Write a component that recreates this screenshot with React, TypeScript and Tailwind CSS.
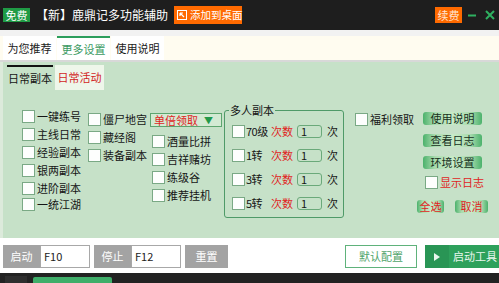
import React from "react";

const Check = ({ label, red }: { label: string; red?: boolean }) => (
  <div className="flex items-center h-[18px]">
    <span className="w-[13px] h-[13px] shrink-0 border border-[#7aa985] bg-[#fdfefd]" />
    <span
      className={
        red
          ? "ml-[2px] text-[11px] leading-none text-[#e01e1e] whitespace-nowrap"
          : "ml-[2px] text-[11px] leading-none text-[#151515] whitespace-nowrap"
      }
    >
      {label}
    </span>
  </div>
);

const GBtn = ({ label, className }: { label: string; className: string }) => (
  <div
    className={
      "h-[13px] flex items-center justify-center rounded-[3px] bg-[linear-gradient(90deg,#4cb26c_0%,#a9dbae_20%,#c8ebc8_50%,#a9dbae_80%,#4cb26c_100%)] text-[11px] leading-none " +
      className
    }
  >
    {label}
  </div>
);

const MultiRow = ({ label }: { label: string }) => (
  <div className="flex items-center h-[18px] pl-[7px]">
    <span className="w-[13px] h-[13px] shrink-0 border border-[#7aa985] bg-[#fdfefd]" />
    <span className="ml-[1px] w-[25px] text-[11px] leading-none text-[#151515] tracking-[-0.5px]">{label}</span>
    <span className="w-[26px] text-[11px] leading-none text-[#e01e1e]">次数</span>
    <span className="w-[25px] h-[13px] rounded-[3px] border border-[#6aa97a] flex items-center pl-[3px] text-[11px] leading-none text-[#151515]">
      1
    </span>
    <span className="ml-[5px] text-[11px] leading-none text-[#151515]">次</span>
  </div>
);

export default function App() {
  return (
    <div className="w-[499px] h-[283px] flex flex-col overflow-hidden bg-white font-['Noto_Sans_CJK_SC',sans-serif]">
      {/* title bar */}
      <div className="h-[30px] shrink-0 bg-[#1e1e1e] flex items-center">
        <div className="ml-[3px] w-[27px] h-[14px] bg-[#1f9b45] text-white text-[11px] leading-none flex items-center justify-center">
          免费
        </div>
        <div className="ml-[6px] text-white text-[12px] leading-none whitespace-nowrap">【新】鹿鼎记多功能辅助</div>
        <div className="ml-[6px] h-[18px] w-[68px] bg-[#ff6a00] flex items-center pl-[3px] text-white text-[10.5px] leading-none whitespace-nowrap">
          <svg width="10" height="10" viewBox="0 0 10 10" className="shrink-0 mr-[3px]">
            <rect x="0.5" y="0.5" width="9" height="9" fill="none" stroke="#fff" strokeWidth="1" />
            <path d="M3 3 L7 7 M3 3 H6 M3 3 V6" fill="none" stroke="#fff" strokeWidth="1.2" />
          </svg>
          添加到桌面
        </div>
        <div className="flex-1" />
        <div className="w-[27px] h-[16px] bg-[#ff6a00] text-[#ffe6d2] text-[11px] leading-none flex items-center justify-center">
          续费
        </div>
        <svg width="10" height="10" viewBox="0 0 10 10" className="ml-[5px]">
          <path d="M1 5.5 H9" stroke="#2fb060" strokeWidth="2" />
        </svg>
        <svg width="10" height="10" viewBox="0 0 10 10" className="ml-[8px] mr-[4px]">
          <path d="M1 1 L9 9 M9 1 L1 9" stroke="#2fb060" strokeWidth="2" />
        </svg>
      </div>

      {/* tab bar */}
      <div className="h-[32px] shrink-0 bg-[#f2f2f2] pt-[6px] border-b-2 border-[#d8d8d8]">
        <div className="h-[24px] bg-[#fffcf0] flex pl-[3px]">
          <div className="w-[53px] bg-white flex items-center justify-center text-[11px] leading-none text-[#1a1a1a]">
            为您推荐
          </div>
          <div className="ml-[1px] w-[53px] bg-white border-t-2 border-[#2c9e5c] flex items-center justify-center text-[11px] leading-none text-[#3a9a62]">
            更多设置
          </div>
          <div className="ml-[1px] w-[53px] bg-white flex items-center justify-center text-[11px] leading-none text-[#1a1a1a]">
            使用说明
          </div>
        </div>
      </div>

      {/* green area */}
      <div className="h-[176px] shrink-0 bg-[#c6e1c8] flex flex-col border-l-[3px] border-[#dceadb]">
        {/* inner tabs */}
        <div className="mt-[3px] h-[25px] flex pl-[4px]">
          <div className="w-[46px] border-t-2 border-[#111] flex items-center justify-center text-[11px] leading-none text-[#151515]">
            日常副本
          </div>
          <div className="ml-[2px] w-[49px] bg-[#eef6ea] flex items-center justify-center text-[11px] leading-none text-[#d21e1e]">
            日常活动
          </div>
        </div>

        {/* body */}
        <div className="flex-1 flex items-start pl-[19px]">
          <div className="w-[66px] mt-[17px] flex flex-col">
            <Check label="一键练号" />
            <Check label="主线日常" />
            <Check label="经验副本" />
            <Check label="银两副本" />
            <Check label="进阶副本" />
            <div className="-mt-[2px]">
              <Check label="一统江湖" />
            </div>
          </div>
          <div className="w-[62px] mt-[20px] flex flex-col">
            <Check label="僵尸地宫" />
            <Check label="藏经阁" />
            <Check label="装备副本" />
          </div>
          <div className="w-[74px] mt-[23px] flex flex-col">
            <div className="w-[72px] h-[14px] border border-[#5da56f] bg-[#d3ead3] flex items-center pl-[3px] text-[11px] leading-none text-[#e01e1e]">
              单倍领取
              <span className="ml-auto mr-[8px] text-[9px] text-[#22994a]">▼</span>
            </div>
            <div className="mt-[5px] ml-[2px] flex flex-col">
              <Check label="酒量比拼" />
              <Check label="吉祥赌坊" />
              <Check label="练级谷" />
              <Check label="推荐挂机" />
            </div>
          </div>
          <fieldset className="mt-[13px] w-[120px] border border-[#4f9a68] rounded-[3px] pb-[5px]">
            <legend className="ml-[4px] px-[1px] text-[11px] leading-[14px] text-[#151515]">多人副本</legend>
            <div className="pt-[5px] flex flex-col gap-[6px]">
              <MultiRow label="70级" />
              <MultiRow label="1转" />
              <MultiRow label="3转" />
              <MultiRow label="5转" />
            </div>
          </fieldset>
          <div className="ml-[11px] w-[62px] mt-[20px]">
            <Check label="福利领取" />
          </div>
          <div className="w-[72px] mt-[22px] flex flex-col">
            <GBtn label="使用说明" className="ml-[6px] w-[59px] text-[#16301c]" />
            <GBtn label="查看日志" className="mt-[9px] ml-[6px] w-[59px] text-[#16301c]" />
            <GBtn label="环境设置" className="mt-[9px] ml-[6px] w-[59px] text-[#16301c]" />
            <div className="mt-[4px] ml-[8px]">
              <Check label="显示日志" red />
            </div>
            <div className="mt-[9px] flex">
              <GBtn label="全选" className="w-[27px] text-[#e01e1e]" />
              <GBtn label="取消" className="ml-[11px] w-[33px] text-[#e01e1e]" />
            </div>
          </div>
        </div>
      </div>

      {/* bottom bar */}
      <div className="h-[35px] shrink-0 bg-white flex items-start pt-[7px] pl-[3px]">
        <div className="w-[37px] h-[23px] bg-[#a3a3a3] text-white text-[11px] leading-none flex items-center justify-center">
          启动
        </div>
        <div className="w-[50px] h-[23px] border border-[#a8a8a8] bg-white text-[11px] leading-none flex items-center pl-[3px] text-[#222]">
          F10
        </div>
        <div className="ml-[4px] w-[37px] h-[23px] bg-[#a3a3a3] text-white text-[11px] leading-none flex items-center justify-center">
          停止
        </div>
        <div className="w-[50px] h-[23px] border border-[#a8a8a8] bg-white text-[11px] leading-none flex items-center pl-[3px] text-[#222]">
          F12
        </div>
        <div className="ml-[4px] w-[43px] h-[23px] bg-[#a3a3a3] text-white text-[11px] leading-none flex items-center justify-center">
          重置
        </div>
        <div className="flex-1" />
        <div className="w-[72px] h-[23px] border border-[#5fb27b] bg-white text-[#4fa46a] text-[11px] leading-none flex items-center justify-center">
          默认配置
        </div>
        <div className="ml-[8px] w-[74px] h-[23px] bg-[#2ea15c] flex items-center text-[#e9f7ee] text-[11px] leading-none">
          <div className="w-[24px] h-full bg-[#299555] flex items-center justify-center">
            <svg width="6" height="8" viewBox="0 0 6 8">
              <path d="M0 0 L6 4 L0 8 Z" fill="#e9f7ee" />
            </svg>
          </div>
          <span className="ml-[4px]">启动工具</span>
        </div>
      </div>

      {/* bottom dark strip */}
      <div className="flex-1 bg-[#222] flex items-end">
        <div className="ml-[5px] w-[22px] h-[7px] bg-[#2e2e2e]" />
        <div className="ml-[6px] w-[79px] h-[6px] bg-[#3fae6a] rounded-t-[2px]" />
      </div>
    </div>
  );
}
